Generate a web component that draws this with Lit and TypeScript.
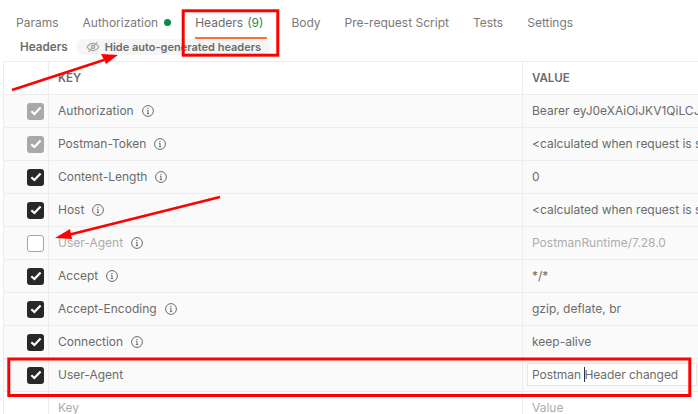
import { LitElement, html, css, svg } from 'lit';
import { customElement } from 'lit/decorators.js';

interface HeaderRow {
  key: string;
  value: string;
  state: 'locked' | 'on' | 'off';
}

const ROWS: HeaderRow[] = [
  { key: 'Authorization', value: 'Bearer eyJ0eXAiOiJKV1QiLCJ', state: 'locked' },
  { key: 'Postman-Token', value: '<calculated when request is s', state: 'locked' },
  { key: 'Content-Length', value: '0', state: 'on' },
  { key: 'Host', value: '<calculated when request is s', state: 'on' },
  { key: 'User-Agent', value: 'PostmanRuntime/7.28.0', state: 'off' },
  { key: 'Accept', value: '*/*', state: 'on' },
  { key: 'Accept-Encoding', value: 'gzip, deflate, br', state: 'on' },
  { key: 'Connection', value: 'keep-alive', state: 'on' },
];

const TABS = ['Params', 'Authorization', 'Headers', 'Body', 'Pre-request Script', 'Tests', 'Settings'];

const infoIcon = html`<svg class="info" width="12" height="12" viewBox="0 0 12 12" fill="none" stroke="#6b6b6b">
  <circle cx="6" cy="6" r="5.4"></circle>
  <path d="M6 5.2V8.6M4.9 8.6H7.1M4.9 5.2H6"></path>
  <circle cx="6" cy="3.4" r=".6" fill="#6b6b6b" stroke="none"></circle>
</svg>`;

const check = html`<svg width="12" height="10" viewBox="0 0 12 10" fill="none" stroke="#fff" stroke-width="2.2">
  <path d="M1.3 5.2L4.4 8L10.6 1.6"></path>
</svg>`;

@customElement('app-root')
export class AppRoot extends LitElement {
  static styles = css`
    :host {
      display: block;
      position: relative;
      width: 698px;
      height: 414px;
      overflow: hidden;
      background: #fff;
      font-family: Inter, 'Liberation Sans', sans-serif;
      font-size: 12px;
      color: #6b6b6b;
    }
    .tabs {
      display: flex;
      height: 39px;
      padding: 0 0 0 16px;
      box-sizing: border-box;
    }
    .tab {
      display: flex;
      align-items: center;
      height: 39px;
      box-sizing: border-box;
      padding-top: 8px;
      padding-bottom: 2px;
      margin-right: 24px;
      font-size: 12px;
      white-space: nowrap;
      color: #7a7a7a;
    }
    .tab.active {
      color: #6b6b6b;
      border-bottom: 2px solid #ff6c37;
      padding-bottom: 0;
      padding-right: 4px;
    }
    .dot {
      width: 7px;
      height: 7px;
      border-radius: 50%;
      background: #0c8a43;
      margin-left: 6px;
    }
    .count {
      color: #2a8a55;
      margin-left: 4px;
    }
    .sub {
      display: flex;
      align-items: center;
      height: 22px;
      padding: 0 0 6px 20px;
      box-sizing: border-box;
      gap: 8px;
    }
    .sub-title {
      font-weight: 600;
      font-size: 11.7px;
    }
    .pill {
      display: flex;
      align-items: center;
      gap: 5px;
      height: 16px;
      padding: 0 10px;
      border-radius: 8px;
      background: #f5f5f5;
      font-weight: 600;
      font-size: 11px;
      white-space: nowrap;
    }
    .table {
      margin-left: 3px;
      width: 720px;
      border-top: 1px solid #ededed;
      border-left: 1px solid #ededed;
    }
    .row {
      display: grid;
      grid-template-columns: 44px 474px 1fr;
      height: 33px;
      box-sizing: border-box;
      border-bottom: 1px solid #ededed;
      background: #fafafa;
    }
    .row.head,
    .row.blank {
      background: #fff;
    }
    .row.head {
      font-weight: 600;
      font-size: 11.5px;
    }
    .cell {
      display: flex;
      align-items: center;
      gap: 8px;
      min-width: 0;
      white-space: nowrap;
      overflow: hidden;
      box-sizing: border-box;
      padding-left: 9px;
      padding-bottom: 1px;
      border-left: 1px solid #ededed;
    }
    .cell.tick {
      border-left: 0;
      padding: 0 0 0 23px;
    }
    .box {
      width: 17px;
      height: 17px;
      border-radius: 3px;
      box-sizing: border-box;
      display: flex;
      align-items: center;
      justify-content: center;
    }
    .box.on {
      background: #282828;
    }
    .box.locked {
      background: #a9a9a9;
    }
    .box.off {
      background: #fff;
      border: 1px solid #a6a6a6;
    }
    .muted {
      color: #adadad;
    }
    .info {
      flex: none;
    }
    .edit {
      display: flex;
      align-items: center;
      width: 170px;
      height: 23px;
      margin-left: -5px;
      padding-left: 4px;
      box-sizing: border-box;
      background: #fff;
      border: 1px solid #e6e6e6;
      color: #6b6b6b;
      letter-spacing: -0.05px;
      white-space: pre;
    }
    .caret {
      display: inline-block;
      width: 1px;
      height: 15px;
      background: #333;
      margin-right: -1px;
    }
    .overlay {
      position: absolute;
      inset: 0;
      pointer-events: none;
    }
  `;

  private renderRow(r: HeaderRow) {
    const muted = r.state === 'off' ? 'muted' : '';
    return html`<div class="row">
      <div class="cell tick"><span class="box ${r.state}">${r.state === 'off' ? '' : check}</span></div>
      <div class="cell ${muted}">${r.key}${infoIcon}</div>
      <div class="cell ${muted}">${r.value}</div>
    </div>`;
  }

  private renderTab(t: string) {
    if (t === 'Authorization') {
      return html`<div class="tab">${t}<span class="dot"></span></div>`;
    }
    if (t === 'Headers') {
      return html`<div class="tab active">${t}<span class="count">(9)</span></div>`;
    }
    return html`<div class="tab">${t}</div>`;
  }

  render() {
    return html`
      <div class="tabs">${TABS.map((t) => this.renderTab(t))}</div>
      <div class="sub">
        <span class="sub-title">Headers</span>
        <span class="pill">
          <svg width="14" height="12" viewBox="0 0 14 12" fill="none" stroke="#a3a3a3" stroke-width="1.1">
            <path d="M1 6C3 3.2 5 2.4 7 2.4S11 3.2 13 6C11 8.8 9 9.6 7 9.6S3 8.8 1 6Z"></path>
            <circle cx="7" cy="6" r="1.8"></circle>
            <path d="M2.5 11L11.5 1"></path>
          </svg>
          Hide auto-generated headers
        </span>
      </div>
      <div class="table">
        <div class="row head">
          <div class="cell tick"></div>
          <div class="cell">KEY</div>
          <div class="cell">VALUE</div>
        </div>
        ${ROWS.map((r) => this.renderRow(r))}
        <div class="row">
          <div class="cell tick"><span class="box on">${check}</span></div>
          <div class="cell">User-Agent</div>
          <div class="cell"><span class="edit">Postman <span class="caret"></span>Header changed</span></div>
        </div>
        <div class="row blank">
          <div class="cell tick"></div>
          <div class="cell muted">Key</div>
          <div class="cell muted">Value</div>
        </div>
      </div>
      <svg class="overlay" width="698" height="414" viewBox="0 0 698 414" fill="none">
        ${svg`
          <rect x="183.2" y="10.8" width="94.6" height="44.4" stroke="#f00" stroke-width="3"></rect>
          <rect x="8.8" y="359" width="681" height="36.5" stroke="#f00" stroke-width="3"></rect>
          <path d="M12 90L104 60" stroke="#f00" stroke-width="2.5"></path>
          <path d="M118 55L101 54L106 64Z" fill="#f00"></path>
          <path d="M220 197L68 235" stroke="#f00" stroke-width="2.5"></path>
          <path d="M55 238L70 229L72 239Z" fill="#f00"></path>
        `}
      </svg>
    `;
  }
}
